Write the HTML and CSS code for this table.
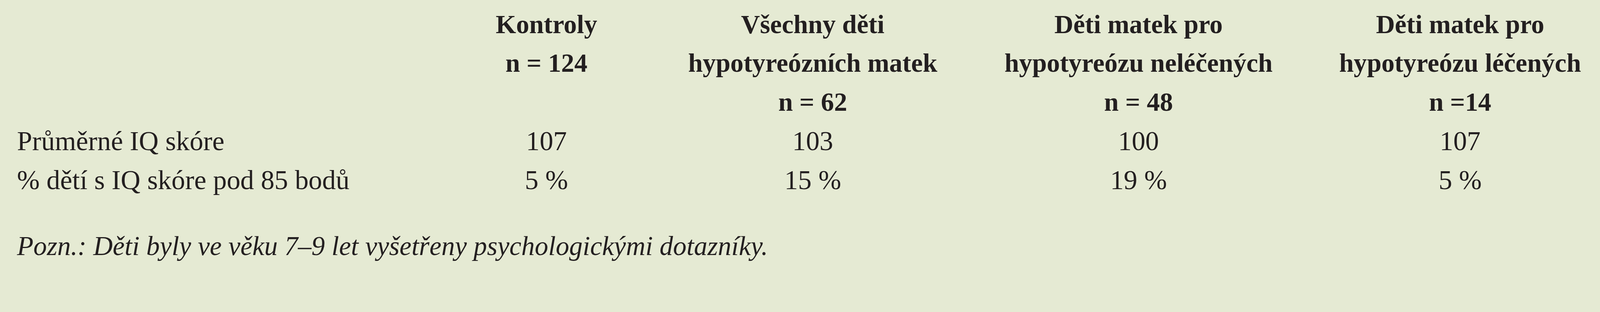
FILE: index.html
```html
<!DOCTYPE html>
<html lang="cs">
<head>
<meta charset="utf-8">
<title>IQ skóre</title>
<link rel="stylesheet" href="styles.css">
</head>
<body>
<div class="page">
  <table class="data">
    <colgroup>
      <col class="c-label">
      <col class="c-1">
      <col class="c-2">
      <col class="c-3">
      <col class="c-4">
    </colgroup>
    <thead>
      <tr>
        <th class="label"></th>
        <th>Kontroly<br>n = 124</th>
        <th>Všechny děti<br>hypotyreózních matek<br>n = 62</th>
        <th>Děti matek pro<br>hypotyreózu neléčených<br>n = 48</th>
        <th>Děti matek pro<br>hypotyreózu léčených<br>n =14</th>
      </tr>
    </thead>
    <tbody>
      <tr>
        <td class="label">Průměrné IQ skóre</td>
        <td>107</td>
        <td>103</td>
        <td>100</td>
        <td>107</td>
      </tr>
      <tr>
        <td class="label">% dětí s IQ skóre pod 85 bodů</td>
        <td>5 %</td>
        <td>15 %</td>
        <td>19 %</td>
        <td>5 %</td>
      </tr>
    </tbody>
  </table>
  <p class="note">Pozn.: Děti byly ve věku 7–9 let vyšetřeny psychologickými dotazníky.</p>
</div>
</body>
</html>
```
FILE: styles.css
```css
:root {
  --u: calc(100vw / 4518);
}

html, body {
  margin: 0;
  padding: 0;
  overflow: hidden;
  background: #e5ead3;
}

.page {
  width: calc(4518 * var(--u));
  height: calc(800 * var(--u));
  box-sizing: border-box;
  padding-top: calc(14 * var(--u));
  color: #231f20;
  font-family: "Liberation Serif", "Times New Roman", serif;
}

.data {
  border-collapse: collapse;
  border-spacing: 0;
  table-layout: fixed;
  width: calc(4483 * var(--u));
}

.c-label { width: calc(1163 * var(--u)); }
.c-1 { width: calc(760 * var(--u)); }
.c-2 { width: calc(744 * var(--u)); }
.c-3 { width: calc(1096 * var(--u)); }
.c-4 { width: calc(720 * var(--u)); }

.data th,
.data td {
  padding: 0;
  text-align: center;
  vertical-align: top;
  white-space: nowrap;
}

.data th {
  font-weight: bold;
  font-size: calc(74 * var(--u));
  line-height: calc(110 * var(--u));
}

.data td {
  font-weight: normal;
  font-size: calc(77 * var(--u));
  line-height: calc(111 * var(--u));
}

.data .label {
  text-align: left;
  padding-left: calc(48 * var(--u));
}

.note {
  margin: calc(75 * var(--u)) 0 0 0;
  padding-left: calc(48 * var(--u));
  font-style: italic;
  font-size: calc(76 * var(--u));
  line-height: calc(111 * var(--u));
  white-space: nowrap;
}
```
